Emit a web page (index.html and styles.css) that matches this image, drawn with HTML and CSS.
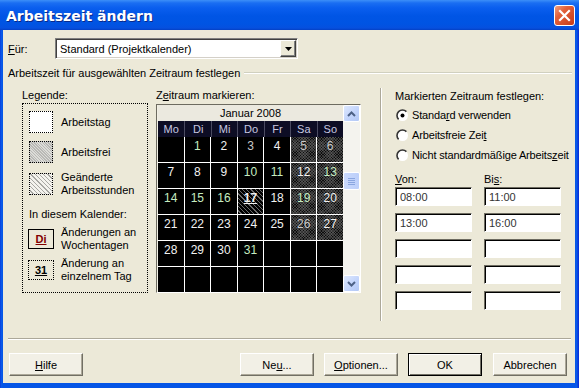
FILE: index.html
```html
<!DOCTYPE html>
<html lang="de">
<head>
    <meta charset="UTF-8">
    <title>Arbeitszeit ändern</title>
    <link rel="stylesheet" href="styles.css">
</head>
<body>
    <div class="dialog">
        <div class="titlebar">
            <span class="title">Arbeitszeit ändern</span>
            <span class="close">
                <svg width="21" height="21" viewBox="0 0 21 21"><path d="M6 6 L15 15 M15 6 L6 15" stroke="#fff" stroke-width="2.2" stroke-linecap="square"/></svg>
            </span>
        </div>
        <div class="content">
            <div class="for-row">
                <span class="for-label"><u>F</u>ür:</span>
                <div class="combo">
                    <span class="combo-text">Standard (Projektkalender)</span>
                    <span class="combo-btn">
                        <svg width="7" height="4" viewBox="0 0 7 4"><path d="M0 0 H7 L3.5 4 Z" fill="#000"/></svg>
                    </span>
                </div>
            </div>
            <div class="group-title">
                <span>Arbeitszeit für ausgewählten Zeitraum festlegen</span>
                <span class="group-line"></span>
            </div>
            <div class="columns">
                <div class="legend-col">
                    <div class="caption">Legende:</div>
                    <div class="legend-box">
                        <div class="legend-item first">
                            <span class="swatch work"></span>
                            <span>Arbeitstag</span>
                        </div>
                        <div class="legend-item">
                            <span class="swatch off"></span>
                            <span>Arbeitsfrei</span>
                        </div>
                        <div class="legend-item">
                            <span class="swatch changed"></span>
                            <span>Geänderte<br>Arbeitsstunden</span>
                        </div>
                        <div class="legend-sub">In diesem Kalender:</div>
                        <div class="legend-item tight">
                            <span class="mark weekday">Di</span>
                            <span>Änderungen an<br>Wochentagen</span>
                        </div>
                        <div class="legend-item tight">
                            <span class="mark single">31</span>
                            <span>Änderung an<br>einzelnem Tag</span>
                        </div>
                    </div>
                </div>

                <div class="cal-col">
                    <div class="caption">Z<u>e</u>itraum markieren:</div>
                    <div class="calendar">
                        <div class="cal-main">
                            <div class="cal-month">Januar 2008</div>
                            <div class="cal-days">
                                <span>Mo</span><span>Di</span><span>Mi</span><span>Do</span><span>Fr</span><span>Sa</span><span>So</span>
                            </div>
                            <div class="cal-grid">
                                <span></span><span class="g">1</span><span>2</span><span class="dim">3</span><span>4</span><span class="we dim">5</span><span class="we dim">6</span>
                                <span>7</span><span>8</span><span>9</span><span class="g">10</span><span class="g">11</span><span class="we">12</span><span class="we g">13</span>
                                <span class="g">14</span><span class="g">15</span><span class="g">16</span><span class="changed-day"><b>17</b></span><span>18</span><span class="we g">19</span><span class="we">20</span>
                                <span>21</span><span>22</span><span>23</span><span>24</span><span>25</span><span class="we dim">26</span><span class="we">27</span>
                                <span>28</span><span>29</span><span>30</span><span class="g">31</span><span></span><span></span><span></span>
                                <span></span><span></span><span></span><span></span><span></span><span></span><span></span>
                            </div>
                        </div>
                        <div class="scrollbar">
                            <span class="sb-btn">
                                <svg width="9" height="6" viewBox="0 0 9 6"><path d="M1 5 L4.5 1.5 L8 5" fill="none" stroke="#4d6185" stroke-width="2"/></svg>
                            </span>
                            <span class="sb-track">
                                <span class="sb-thumb">
                                    <svg width="7" height="8" viewBox="0 0 7 8"><path d="M0 1.5 H7 M0 3.5 H7 M0 5.5 H7 M0 7.5 H7" stroke="#8aa6e0" stroke-width="1"/></svg>
                                </span>
                            </span>
                            <span class="sb-btn">
                                <svg width="9" height="6" viewBox="0 0 9 6"><path d="M1 1 L4.5 4.5 L8 1" fill="none" stroke="#4d6185" stroke-width="2"/></svg>
                            </span>
                        </div>
                    </div>
                </div>

                <div class="right-col">
                    <div class="caption">Markierten Zeitraum festlegen:</div>
                    <div class="radios">
                        <div class="radio">
                            <svg width="13" height="13" viewBox="0 0 13 13"><circle cx="6.5" cy="6.5" r="5.5" fill="#fff"/><path d="M10.4 2.6 A5.5 5.5 0 0 0 2.6 10.4" fill="none" stroke="#333" stroke-width="1.6"/><circle cx="6.5" cy="6.5" r="2" fill="#000"/></svg>
                            <span>Standa<u>r</u>d verwenden</span>
                        </div>
                        <div class="radio">
                            <svg width="13" height="13" viewBox="0 0 13 13"><circle cx="6.5" cy="6.5" r="5.5" fill="#fff"/><path d="M10.4 2.6 A5.5 5.5 0 0 0 2.6 10.4" fill="none" stroke="#333" stroke-width="1.6"/></svg>
                            <span>Arbeitsfreie Zei<u>t</u></span>
                        </div>
                        <div class="radio">
                            <svg width="13" height="13" viewBox="0 0 13 13"><circle cx="6.5" cy="6.5" r="5.5" fill="#fff"/><path d="M10.4 2.6 A5.5 5.5 0 0 0 2.6 10.4" fill="none" stroke="#333" stroke-width="1.6"/></svg>
                            <span>Nicht standardmäßige Arbeits<u>z</u>eit</span>
                        </div>
                    </div>
                    <div class="times">
                        <span class="time-label"><u>V</u>on:</span>
                        <span class="time-label">Bi<u>s</u>:</span>
                        <input class="field" type="text" value="08:00">
                        <input class="field" type="text" value="11:00">
                        <input class="field" type="text" value="13:00">
                        <input class="field" type="text" value="16:00">
                        <input class="field" type="text" value="">
                        <input class="field" type="text" value="">
                        <input class="field" type="text" value="">
                        <input class="field" type="text" value="">
                        <input class="field" type="text" value="">
                        <input class="field" type="text" value="">
                    </div>
                </div>
            </div>

            <div class="footer">
                <button class="btn"><u>H</u>ilfe</button>
                <button class="btn push">Ne<u>u</u>...</button>
                <button class="btn"><u>O</u>ptionen...</button>
                <button class="btn default">OK</button>
                <button class="btn">Abbrechen</button>
            </div>
        </div>
    </div>
</body>
</html>
```

FILE: styles.css
```css
* {
    box-sizing: border-box;
}
html, body {
    margin: 0;
    padding: 0;
}
body {
    font-family: "Liberation Sans", Arial, sans-serif;
    font-size: 11px;
    color: #000;
    background-color: #0a4fd6;
}
.dialog {
    width: 579px;
    height: 388px;
    display: flex;
    flex-direction: column;
    padding: 0 4px 5px 3px;
    background: linear-gradient(to right, #0831d9 0, #0a5ae8 1px, #0555e6 3px, #0555e6 575px, #0a5ae8 577px, #0831d9 578px);
}
.titlebar {
    height: 30px;
    margin: 0 -4px 0 -3px;
    padding: 0 4px 0 6px;
    display: flex;
    align-items: center;
    justify-content: space-between;
    background: linear-gradient(to bottom, #3c8ff8 0, #1a6ef2 3px, #0a5eee 8px, #0055e5 16px, #0054e3 24px, #0650df 28px, #0440c4 30px);
}
.title {
    color: #fff;
    font-family: "DejaVu Sans", sans-serif;
    font-weight: bold;
    font-size: 14px;
    text-shadow: 1px 1px 0 #0a2a8a;
    padding-top: 1px;
}
.close {
    width: 21px;
    height: 21px;
    margin-top: 1px;
    border: 1px solid #fff;
    border-radius: 3px;
    background: linear-gradient(135deg, #f0a080 0, #e2603a 35%, #c73b18 100%);
    display: flex;
    align-items: center;
    justify-content: center;
}
.close svg {
    display: block;
    margin: -1px;
}
.content {
    flex: 1;
    display: flex;
    flex-direction: column;
    background-color: #ece9d8;
}

/* Für row */
.for-row {
    display: flex;
    align-items: center;
    margin-top: 8px;
    padding-left: 5px;
    height: 21px;
}
.for-label {
    width: 47px;
}
.combo {
    width: 243px;
    height: 21px;
    display: flex;
    align-items: center;
    justify-content: space-between;
    background-color: #fff;
    border: 1px solid;
    border-color: #808080 #fff #fff #808080;
    box-shadow: inset 1px 1px 0 #404040, inset -1px -1px 0 #d4d0c8;
}
.combo-text {
    padding-left: 4px;
}
.combo-btn {
    width: 16px;
    height: 17px;
    margin-right: 1px;
    display: flex;
    align-items: center;
    justify-content: center;
    background-color: #ece9d8;
    border: 1px solid;
    border-color: #fff #404040 #404040 #fff;
    box-shadow: inset -1px -1px 0 #808080;
}

/* group heading */
.group-title {
    display: flex;
    align-items: center;
    margin-top: 7px;
    padding: 0 3px 0 5px;
    height: 14px;
}
.group-line {
    flex: 1;
    margin-left: 4px;
    border-top: 1px solid #d0d0bf;
    border-bottom: 1px solid #fff;
}

.columns {
    display: flex;
    margin-top: 8px;
    padding-left: 19px;
    height: 233px;
}
.caption {
    height: 14px;
    line-height: 14px;
    white-space: nowrap;
}

/* legend */
.legend-col {
    width: 126px;
}
.legend-box {
    margin-top: 1px;
    height: 190px;
    border: 1px dotted #000;
    padding: 7px 0 0 6px;
}
.legend-item {
    display: flex;
    align-items: center;
    gap: 8px;
    margin-top: 8px;
    line-height: 13px;
}
.legend-item.first {
    margin-top: 0;
}
.legend-item.tight {
    margin-top: 5px;
}
.swatch {
    width: 24px;
    height: 22px;
    border: 1px dotted #000;
    flex-shrink: 0;
}
.swatch.work {
    background-color: #fff;
}
.swatch.off {
    background: repeating-linear-gradient(45deg, #b9b9b6 0 1px, #dcdcd8 1px 2px);
}
.swatch.changed {
    background: repeating-linear-gradient(45deg, #f4f3ee 0 2px, #a8a8a4 2px 3px);
}
.legend-sub {
    margin-top: 10px;
    height: 14px;
    line-height: 14px;
}
.mark {
    width: 26px;
    height: 20px;
    margin-left: -1px;
    margin-right: -1px;
    display: flex;
    align-items: center;
    justify-content: center;
    font-weight: bold;
    text-decoration: underline;
    flex-shrink: 0;
}
.mark.weekday {
    border: 1px solid #000;
    color: #800000;
}
.mark.single {
    border: 1px dotted #000;
}

/* calendar */
.cal-col {
    width: 205px;
    margin-left: 8px;
}
.calendar {
    margin-top: 2px;
    height: 189px;
    display: flex;
    border: 1px solid;
    border-color: #6d6b60 #fff #fff #6d6b60;
    background-color: #f1efe4;
}
.cal-main {
    width: 186px;
    padding-left: 1px;
}
.cal-month {
    height: 16px;
    line-height: 16px;
    text-align: center;
    background-color: #ebe9df;
}
.cal-days {
    height: 16px;
    display: grid;
    grid-template-columns: repeat(7, 1fr);
    background-color: #0d0d24;
    color: #c8c8e0;
}
.cal-days span {
    text-align: center;
    line-height: 16px;
    border-left: 1px solid #4a4a60;
}
.cal-days span:first-child {
    border-left: none;
}
.cal-grid {
    display: grid;
    grid-template-columns: repeat(7, 1fr);
    grid-template-rows: repeat(6, 25px);
    gap: 1px;
    background-color: #fff;
    height: 155px;
}
.cal-grid span {
    background-color: #000;
    color: #f2f2f2;
    text-align: center;
    padding-top: 2px;
    font-size: 12px;
}
.cal-grid span.g {
    color: #c6ecc0;
}
.cal-grid span.dim {
    color: #c8c8c8;
}
.cal-grid span.we {
    background: repeating-linear-gradient(45deg, rgba(120, 120, 120, 0.4) 0 1px, transparent 1px 2px), repeating-linear-gradient(-45deg, rgba(120, 120, 120, 0.4) 0 1px, transparent 1px 2px), #0c0c0c;
}
.cal-grid span.changed-day {
    background: repeating-linear-gradient(45deg, #000 0 2px, #6a6a6a 2px 3px);
    text-decoration: underline;
}
.scrollbar {
    width: 17px;
    display: flex;
    flex-direction: column;
    background-color: #f4f3ee;
}
.sb-btn {
    width: 17px;
    height: 17px;
    display: flex;
    align-items: center;
    justify-content: center;
    border: 1px solid #fff;
    border-radius: 2px;
    background: linear-gradient(135deg, #dde8fe 0, #c1d3fb 60%, #b3c8f5 100%);
}
.sb-track {
    flex: 1;
    padding-top: 50px;
}
.sb-thumb {
    width: 17px;
    height: 18px;
    display: flex;
    align-items: center;
    justify-content: center;
    border: 1px solid #fff;
    border-radius: 2px;
    background: linear-gradient(to right, #cad9fc, #bccffa);
}

/* right column */
.right-col {
    margin-left: 19px;
    padding-left: 14px;
    border-left: 1px solid #aca899;
    box-shadow: inset 1px 0 0 #fff;
    height: 233px;
    width: 194px;
}
.right-col .caption {
    margin-top: 1px;
}
.radios {
    margin-top: 2px;
}
.radio {
    display: flex;
    align-items: center;
    gap: 3px;
    height: 20px;
    margin-left: 1px;
    white-space: nowrap;
    letter-spacing: -0.15px;
}
.radio svg {
    display: block;
    flex-shrink: 0;
}
.times {
    display: grid;
    grid-template-columns: 77px 77px;
    column-gap: 12px;
    row-gap: 7px;
    margin-top: 7px;
}
.time-label {
    height: 14px;
    line-height: 14px;
    margin-bottom: -6px;
}
.field {
    width: 77px;
    height: 19px;
    margin: 0;
    padding: 0 0 0 4px;
    font-family: "Liberation Sans", Arial, sans-serif;
    font-size: 11px;
    color: #333;
    background-color: #fff;
    border: 1px solid;
    border-color: #6d6b60 #fff #fff #6d6b60;
    box-shadow: inset 1px 1px 0 #000;
    outline: none;
}

/* footer buttons */
.footer {
    margin: auto 4px 0 5px;
    padding: 14px 4px 7px 1px;
    display: flex;
    gap: 10px;
    border-top: 1px solid #aca899;
    box-shadow: inset 0 1px 0 #fff;
}
.btn {
    width: 74px;
    height: 23px;
    padding: 0;
    font-family: "Liberation Sans", Arial, sans-serif;
    font-size: 11px;
    color: #000;
    background-color: #f2f0e6;
    border: 1px solid;
    border-color: #fff #716f64 #716f64 #fff;
    box-shadow: inset -1px -1px 0 #aca899;
}
.btn.push {
    margin-left: auto;
}
.btn.default {
    border: 1px solid #000;
    box-shadow: inset 1px 1px 0 #fff, inset -1px -1px 0 #716f64;
}
.btn.default + .btn {
    margin-left: 1px;
}
```
